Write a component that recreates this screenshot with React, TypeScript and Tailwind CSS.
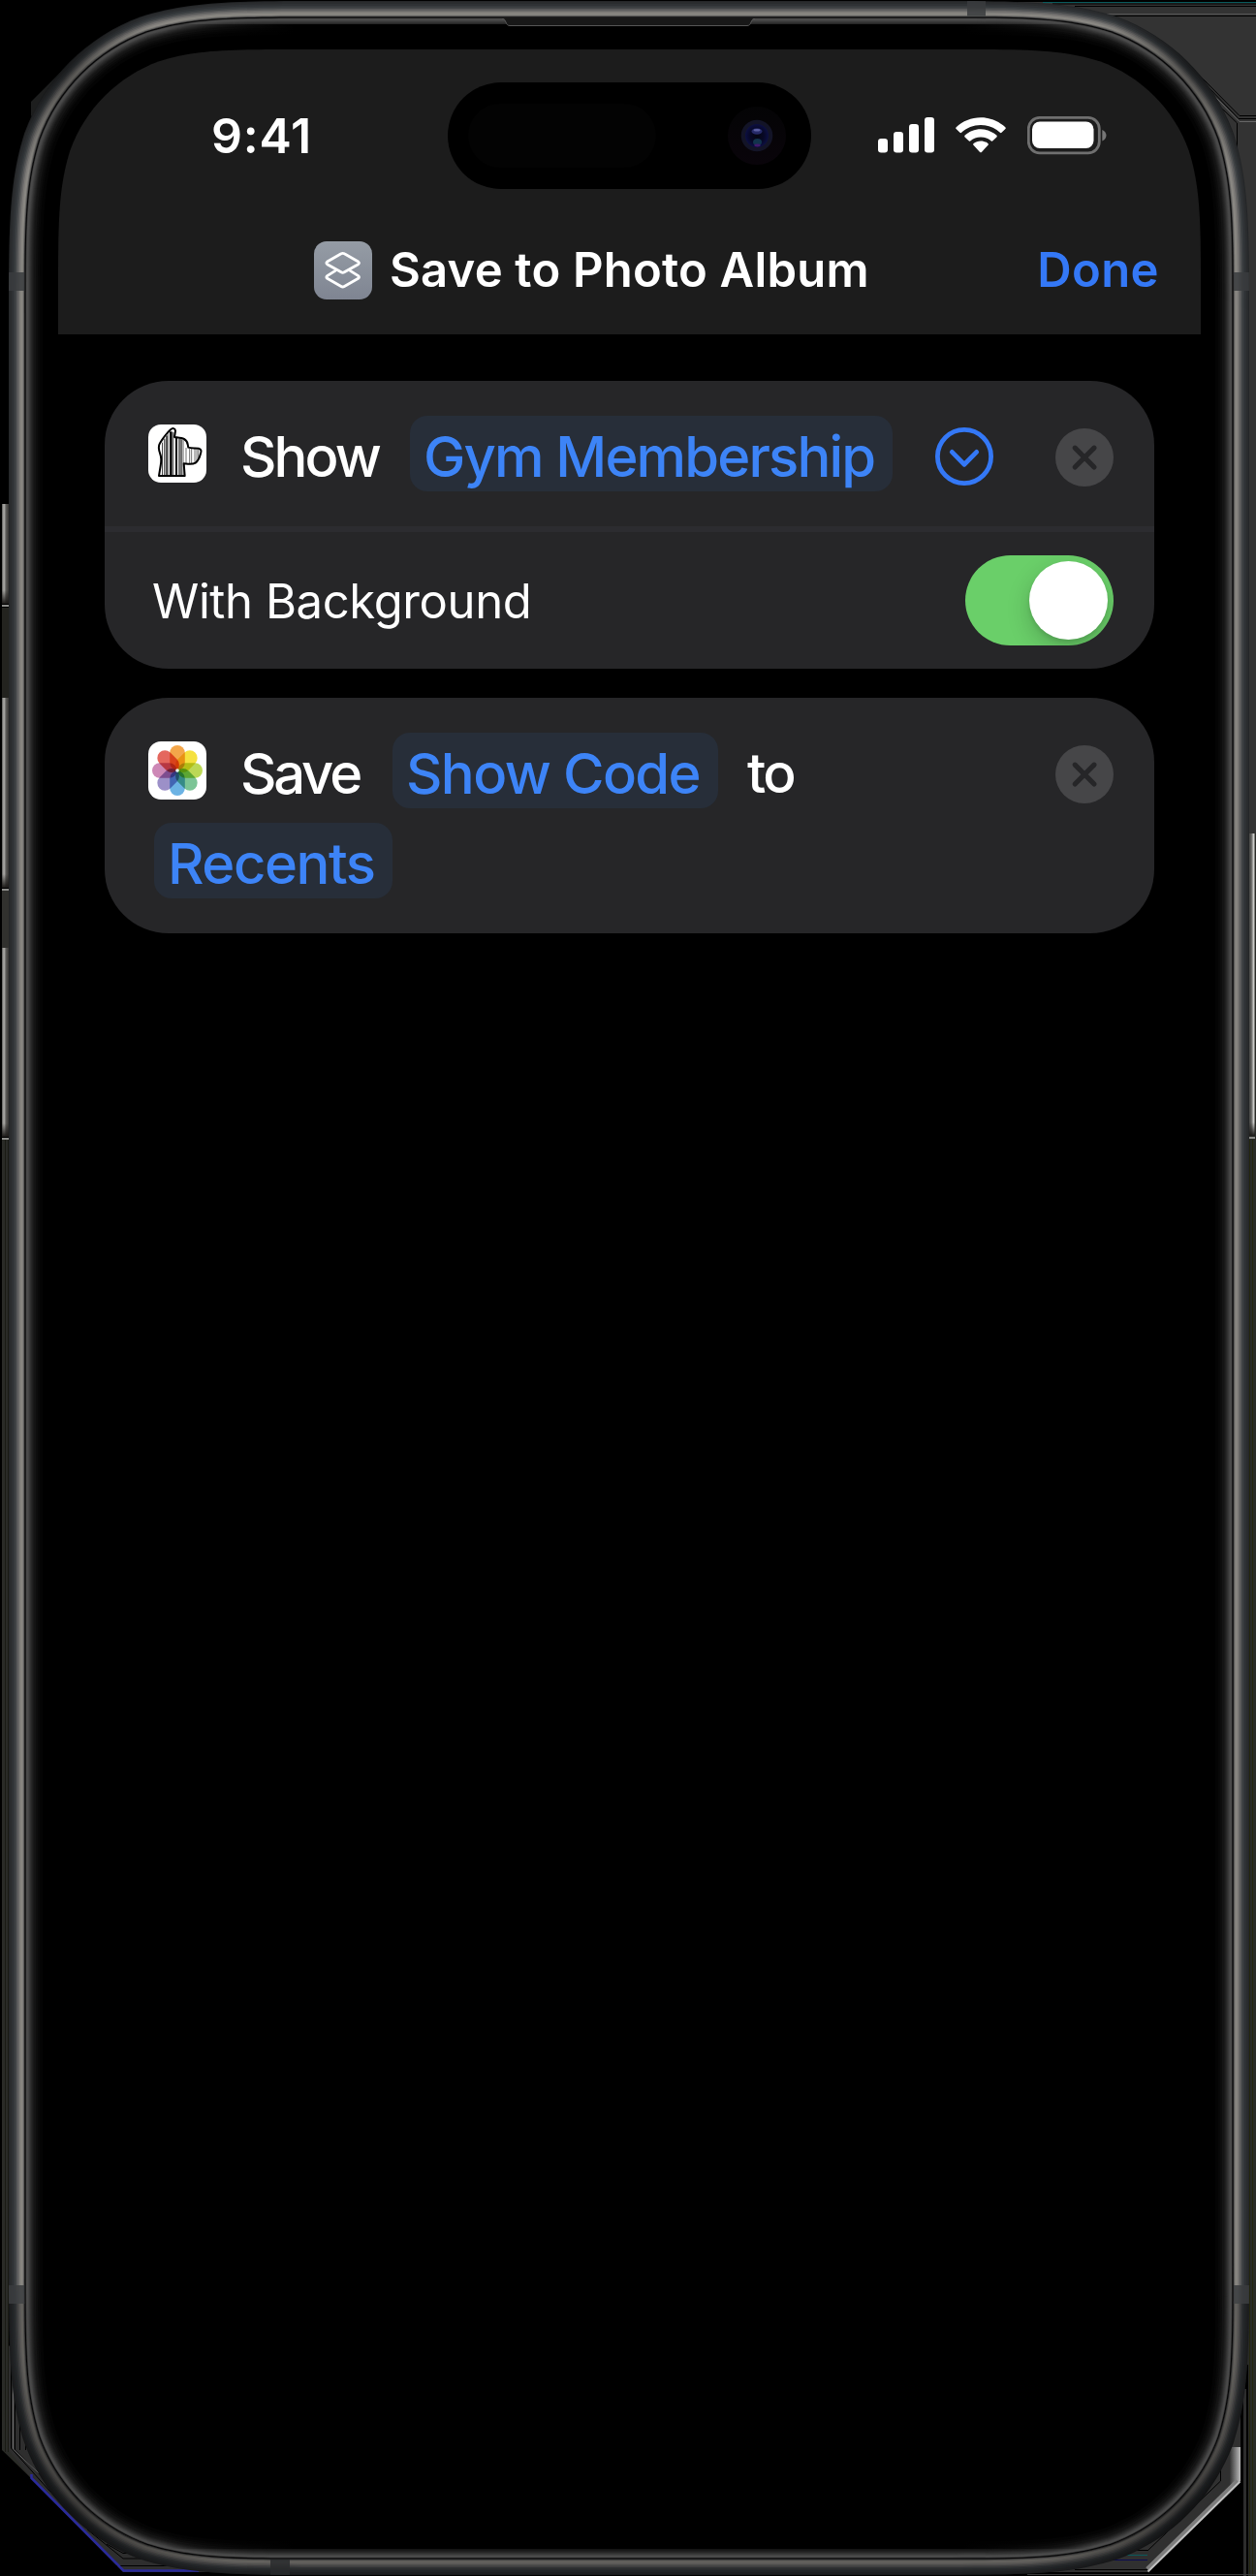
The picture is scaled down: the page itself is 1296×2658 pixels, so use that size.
import type { ReactNode } from "react";

/** Continuous-curvature rounded rectangle, as used for device outlines. */
function smoothRect(x: number, y: number, w: number, h: number, r: number) {
  const a = 1.528665 * r;
  const b = 1.088493 * r;
  const c = 0.868407 * r;
  const d = 0.631494 * r;
  const e = 0.074911 * r;
  const f = 0.372824 * r;
  const g = 0.16906 * r;
  const R = x + w;
  const B = y + h;
  return [
    `M${x + a} ${y}H${R - a}`,
    `C${R - b} ${y} ${R - c} ${y} ${R - d} ${y + e}C${R - f} ${y + g} ${R - g} ${y + f} ${R - e} ${y + d}C${R} ${y + c} ${R} ${y + b} ${R} ${y + a}`,
    `V${B - a}`,
    `C${R} ${B - b} ${R} ${B - c} ${R - e} ${B - d}C${R - g} ${B - f} ${R - f} ${B - g} ${R - d} ${B - e}C${R - c} ${B} ${R - b} ${B} ${R - a} ${B}`,
    `H${x + a}`,
    `C${x + b} ${B} ${x + c} ${B} ${x + d} ${B - e}C${x + f} ${B - g} ${x + g} ${B - f} ${x + e} ${B - d}C${x} ${B - c} ${x} ${B - b} ${x} ${B - a}`,
    `V${y + a}`,
    `C${x} ${y + b} ${x} ${y + c} ${x + e} ${y + d}C${x + g} ${y + f} ${x + f} ${y + g} ${x + d} ${y + e}C${x + c} ${y} ${x + b} ${y} ${x + a} ${y}Z`,
  ].join("");
}

const outline = (inset: number) =>
  smoothRect(9 + inset, 1 + inset, 1280 - inset * 2, 2656 - inset * 2, 216 - inset);

const SCREEN = smoothRect(60, 51, 1179, 2556, 165);

/** Metal band and inner glow, from the outside in. */
const RINGS: [number, string][] = [
  [0, "#242628"],
  [1, "#2a2c2e"],
  [3, "#2f3235"],
  [5, "#363a3d"],
  [6.5, "#424547"],
  [8, "#565758"],
  [9.5, "#6b6a69"],
  [11, "#7e7c79"],
  [12.5, "#898782"],
  [14.7, "#6a6967"],
  [15.7, "#3c3c3c"],
  [16.4, "#050506"],
  [17.4, "#303030"],
  [18, "#4a4a4a"],
  [20, "#434343"],
  [21, "#393939"],
  [22, "#303030"],
  [23, "#272727"],
  [24, "#202020"],
  [25, "#191919"],
  [26, "#141414"],
  [28, "#0d0d0d"],
  [30, "#080808"],
  [32, "#040404"],
  [35, "#000000"],
];

function SideButton({ x, y, h, flip }: { x: number; y: number; h: number; flip?: boolean }) {
  return (
    <g>
      <rect x={x} y={y} width="7" height={h} fill={flip ? "url(#btnR)" : "url(#btnL)"} />
      <rect x={x} y={y + h - 14} width="7" height="14" fill="url(#btnEnd)" />
      <rect x={x} y={y + h + 1} width="7" height="2" fill="#8c8c89" />
    </g>
  );
}

function Surroundings() {
  return (
    <svg className="absolute inset-0" width="1296" height="2658" viewBox="0 0 1296 2658" fill="none">
      <defs>
        <linearGradient id="btnL">
          <stop offset="0" stopColor="#5a5a57" />
          <stop offset=".3" stopColor="#b4b3af" />
          <stop offset=".6" stopColor="#5d5c59" />
          <stop offset="1" stopColor="#383735" />
        </linearGradient>
        <linearGradient id="btnR">
          <stop offset="0" stopColor="#3a3a39" />
          <stop offset=".45" stopColor="#5f5f5d" />
          <stop offset=".8" stopColor="#d0d0cd" />
          <stop offset="1" stopColor="#555553" />
        </linearGradient>
        <linearGradient id="btnEnd" x1="0" y1="0" x2="0" y2="1">
          <stop offset="0" stopColor="#1c1a18" stopOpacity="0" />
          <stop offset="1" stopColor="#1c1a18" />
        </linearGradient>
        <linearGradient id="shine" x1="0" y1="0" x2="1" y2="0">
          <stop offset="0" stopColor="#333333" />
          <stop offset="1" stopColor="#bdbdbd" />
        </linearGradient>
      </defs>

      {/* top right */}
      <path d="M1050 2H1296V860H1200V200Z" fill="#333333" />
      <path d="M1076 2.5H1296" stroke="#0a5a5c" />
      <path d="M1086 4H1296M1109 6.5H1296M1148 16.5H1296" stroke="#000" />
      <path d="M1142 14.5H1296" stroke="#555" />
      <path d="M1236 76L1279 119.5H1296M1246 89L1278 122.5H1296M1259 110L1276.500 127V153" stroke="#000" />
      <path d="M1252 98L1279 125.500H1296" stroke="#666" />
      {/* top left */}
      <path d="M32 105L75 62L60 100L32 120Z" fill="#1d1e1e" />
      {/* left */}
      <path d="M2 627H9V720H2Z" fill="#23231f" />
      <path d="M2 919H9V978H2Z" fill="#31312e" />
      <path d="M2 1176H9V2430L32 2557L2 2528Z" fill="#2a2b27" />
      <path d="M5.500 1176V2530M8.500 1176V2530" stroke="#1a1b14" />
      <SideButton x={2} y={520} h={103} />
      <SideButton x={2} y={720} h={196} />
      <SideButton x={2} y={978} h={195} />
      {/* right */}
      <path d="M1287 860H1296V2658H1287Z" fill="#292a27" />
      <path d="M1292.500 1176V2658M1289.500 1176V2658" stroke="#24260f" />
      <SideButton x={1288} y={860} h={312} flip />
      {/* bottom left */}
      <path d="M9 2420V2528L32 2557L127 2654H225L120 2560L30 2440Z" fill="#2e2e2e" />
      <path d="M11.500 2430V2526L60 2580M15.500 2470V2528L50 2562M20.500 2500V2528M26.500 2515V2528" stroke="#000" />
      <path d="M13.500 2460V2527L40 2552" stroke="#666" />
      <path d="M90 2610L127 2640H160M110 2625L127 2634.500H150M120 2647.500H190" stroke="#000" />
      <path d="M32.500 2553V2557L127.500 2652.500H205" stroke="#2a2a9a" strokeWidth="2.500" />
      {/* bottom right */}
      <path d="M1281 2440H1288V2658H1281Z" fill="#000" />
      <path d="M1284.500 2465V2658" stroke="#2d2d2d" strokeWidth="3" />
      <path d="M1280 2460V2560L1184 2654H1070L1180 2560Z" fill="#303030" />
      <path d="M1269 2525H1280V2560L1269 2569Z" fill="url(#shine)" />
      <path d="M1277 2560L1184 2651" stroke="#7d7d7d" strokeWidth="5" />
      <path d="M1279.500 2560.500L1184.500 2653.500" stroke="#c0c0c0" strokeWidth="2" />
      <path d="M1259.500 2547V2560L1184 2632M1172 2631.500H1184M1109 2651.500H1184" stroke="#000" />
      <path d="M1161 2636.500H1184" stroke="#0a5a5c" />
      <path d="M1148 2641.500H1184" stroke="#0a0a50" />
      <path d="M1060 2656.500H1296" stroke="#3a3a3a" />
    </svg>
  );
}

function DeviceFrame() {
  return (
    <svg className="pointer-events-none absolute inset-0" width="1296" height="2658" viewBox="0 0 1296 2658" fill="none">
      <defs>
        <mask id="bezel" maskUnits="userSpaceOnUse" x="0" y="0" width="1296" height="2658">
          <rect width="1296" height="2658" fill="#fff" />
          <path d={SCREEN} fill="#000" />
        </mask>
        <clipPath id="band">
          <path d={`${outline(0)}${outline(16.5)}`} clipRule="evenodd" />
        </clipPath>
        <linearGradient id="fadeX">
          <stop offset="0" stopColor="#000" stopOpacity="0" />
          <stop offset=".14" stopColor="#000" />
          <stop offset=".86" stopColor="#000" />
          <stop offset="1" stopColor="#000" stopOpacity="0" />
        </linearGradient>
        <radialGradient id="cornerShade">
          <stop offset="0" stopColor="#000" stopOpacity=".4" />
          <stop offset="1" stopColor="#000" stopOpacity="0" />
        </radialGradient>
      </defs>
      <g mask="url(#bezel)">
        {RINGS.map(([inset, color]) => (
          <path key={inset} d={outline(inset)} fill={color} />
        ))}
        <rect x="170" y="25" width="958" height="20" fill="url(#fadeX)" />
        <rect x="170" y="2612" width="958" height="18" fill="url(#fadeX)" />
        <path d="M518 18.500C523 18.500 521 26.500 526 26.500H771C776 26.500 774 18.500 779 18.500" fill="#181818" />
        <path d="M518 19.500C523 19.500 521 26.500 526 26.500H771C776 26.500 774 19.500 779 19.500" stroke="#565656" />
        <g clipPath="url(#band)">
          {/* antenna bands */}
          <g fill="#3a3c3e" fillOpacity=".85">
            <rect x="9" y="281" width="16.500" height="19" />
            <rect x="1273" y="281" width="16" height="19" />
            <rect x="9" y="2358" width="16.500" height="19" />
            <rect x="1273" y="2358" width="16" height="19" />
            <rect x="998" y="1" width="19" height="15.500" />
            <rect x="279" y="2641" width="20" height="16" />
          </g>
          <rect y="2377" width="1296" height="281" fill="#000" fillOpacity=".28" />
          <circle cx="75" cy="2590" r="170" fill="url(#cornerShade)" />
          <circle cx="1223" cy="2590" r="170" fill="url(#cornerShade)" />
          <circle cx="60" cy="70" r="110" fill="url(#cornerShade)" />
          <circle cx="1238" cy="70" r="110" fill="url(#cornerShade)" />
        </g>
      </g>
    </svg>
  );
}

function DynamicIsland() {
  return (
    <div className="flex h-[110px] w-[375px] items-center justify-between rounded-full bg-black pr-[26px] pl-[21px]">
      <div className="h-[66px] w-[194px] rounded-full bg-[#030303]" />
      <svg width="60" height="60" viewBox="0 0 60 60">
        <defs>
          <linearGradient id="lensRing" x1="0" y1="0" x2="0" y2="1">
            <stop offset="0" stopColor="#040405" />
            <stop offset="1" stopColor="#09040a" />
          </linearGradient>
          <radialGradient id="lens">
            <stop offset="0" stopColor="#05060f" />
            <stop offset=".6" stopColor="#070826" />
            <stop offset="1" stopColor="#0c0f42" />
          </radialGradient>
        </defs>
        <circle cx="30" cy="30" r="30" fill="url(#lensRing)" />
        <circle cx="30" cy="30" r="16.300" fill="#131427" />
        <circle cx="30" cy="30" r="12" fill="url(#lens)" />
        <ellipse cx="30" cy="25.500" rx="5.500" ry="3.200" fill="#262a68" />
        <ellipse cx="30" cy="24.300" rx="3.500" ry="1.200" fill="#5c60a4" />
        <ellipse cx="30.500" cy="36.500" rx="4.500" ry="3.600" fill="#12334c" />
        <ellipse cx="30.500" cy="40" rx="3.200" ry="1.400" fill="#41186c" />
      </svg>
    </div>
  );
}

function StatusIcons() {
  return (
    <div className="flex items-center gap-[22px]">
      <svg width="58" height="40" viewBox="0 0 58 40" fill="#fff">
        <rect x="0" y="23" width="10" height="14.500" rx="3.200" />
        <rect x="16" y="16" width="10" height="21.500" rx="3.200" />
        <rect x="32" y="8" width="10" height="29.500" rx="3.200" />
        <rect x="48" y="1" width="10" height="36.500" rx="3.200" />
      </svg>
      <svg width="52" height="40" viewBox="0 0 52 40" fill="#fff">
        <path d="M26 1.200C35.800 1.200 44.700 5 51.300 11.200C51.900 11.800 51.900 12.500 51.400 13L47.500 16.800C47 17.300 46.400 17.300 45.900 16.800C40.600 11.800 33.700 8.900 26 8.900S11.400 11.800 6.100 16.800C5.600 17.300 5 17.300 4.500 16.800L.6 13C.1 12.500 .1 11.800 .7 11.200C7.300 5 16.200 1.200 26 1.200Z" />
        <path d="M26 13.300C32.300 13.300 38 15.700 42.300 19.600C42.900 20.100 42.900 20.900 42.400 21.400L38.400 25.300C37.900 25.800 37.300 25.800 36.800 25.400C33.900 22.900 30.200 21.400 26 21.400S18.100 22.900 15.200 25.400C14.700 25.800 14.100 25.800 13.600 25.300L9.600 21.400C9.100 20.900 9.100 20.100 9.700 19.600C14 15.700 19.700 13.300 26 13.300Z" />
        <path d="M26 25.400C28.800 25.400 31.400 26.400 33.400 28C34 28.500 34 29.200 33.500 29.700L26.900 36.900C26.400 37.500 25.600 37.500 25.100 36.900L18.500 29.700C18 29.200 18 28.500 18.600 28C20.600 26.400 23.200 25.400 26 25.400Z" />
      </svg>
      <svg width="82" height="42" viewBox="0 0 82 42">
        <rect x="1.300" y="2.300" width="73" height="36.500" rx="11.500" fill="none" stroke="#6f6f6f" strokeWidth="2.800" />
        <rect x="5" y="6.500" width="63.500" height="27.500" rx="8" fill="#fff" />
        <path d="M77.300 15C79.800 16 81.500 18.200 81.500 20.800S79.800 25.600 77.300 26.600Z" fill="#777" />
      </svg>
    </div>
  );
}

function ShortcutsIcon() {
  return (
    <div className="h-[60px] w-[60px] shrink-0 rounded-[13px] bg-linear-to-b from-[#959ca5] to-[#7f8592]">
      <svg width="60" height="60" viewBox="0 0 180 180" fill="none" stroke="#fff" strokeWidth="8.500" strokeLinejoin="round" strokeLinecap="round">
        <path d="M84 38.500Q89 35.500 94 38.500L137 63Q142 67 137 71L94 95.500Q89 98.500 84 95.500L41 71Q36 67 41 63Z" />
        <path d="M66 91L41 107Q36 111 41 115L84 139.500Q89 142.500 94 139.500L137 115Q142 111 137 107L112 91" />
      </svg>
    </div>
  );
}

const STRIPES: [number, number, number, string][] = [
  [42, 56, 3, "#444"],
  [49, 44, 3, "#111"],
  [55, 34, 4, "#000"],
  [61, 28, 2, "#555"],
  [66, 22, 8, "#000"],
  [76, 24, 3, "#444"],
  [84, 42, 6, "#000"],
  [93, 44, 9, "#777"],
  [103, 46, 3, "#222"],
  [109, 48, 2, "#888"],
];

function PassAppIcon() {
  return (
    <div className="h-[60px] w-[60px] shrink-0 rounded-[13px] bg-white">
      <svg width="60" height="60" viewBox="0 0 180 180" fill="none">
        {STRIPES.map(([x, y, w, color]) => (
          <rect key={x} x={x} y={y} width={w} height={156 - y} fill={color} />
        ))}
        <path d="M117 72V122M128 75V121M134 75V121M144 75V121M150 76V115M155 77V107" stroke="#555" strokeWidth="2.500" />
        <path
          d="M33 159L38 128C41 112 40 100 37 92C31 76 31 66 36 58C42 47 60 24 69 16C75 10 83 11 84 20L81 39C94 41 104 42 111 45C124 52 121 60 124 71C134 75 146 72 156 74C164 76 165 82 162 90C159 102 154 113 146 119C136 125 122 122 110 121L113 159Z"
          stroke="#000"
          strokeWidth="6"
          strokeLinejoin="round"
        />
      </svg>
    </div>
  );
}

const PETALS = ["#f3a64a", "#f5e13f", "#bcd856", "#7cc496", "#6cb3e4", "#9c90c8", "#cd88b6", "#e4675e"];

function PhotosIcon() {
  return (
    <div className="h-[60px] w-[60px] shrink-0 rounded-[13px] bg-white">
      <svg className="isolate" width="60" height="60" viewBox="0 0 60 60">
        {PETALS.map((color, i) => (
          <rect
            key={color}
            className="mix-blend-multiply"
            x="22.200"
            y="4"
            width="15.600"
            height="25.500"
            rx="7.800"
            fill={color}
            transform={`rotate(${i * 45} 30 30)`}
          />
        ))}
        <circle cx="30" cy="30" r="1.800" fill="#e8fbf4" />
      </svg>
    </div>
  );
}

function RemoveButton() {
  return (
    <button aria-label="Remove" className="mt-[8px] mr-[42px] ml-auto h-[60px] w-[60px] shrink-0">
      <svg width="60" height="60" viewBox="0 0 60 60">
        <circle cx="30" cy="30" r="30" fill="#464648" />
        <path d="M20.200 20.200L40 40M40 20.200L20.200 40" stroke="#262628" strokeWidth="5.200" strokeLinecap="round" />
      </svg>
    </button>
  );
}

function ExpandButton() {
  return (
    <button aria-label="Collapse options" className="mt-[6px] ml-[44px] h-[60px] w-[60px] shrink-0">
      <svg width="60" height="60" viewBox="0 0 60 60" fill="none" stroke="#3478f6">
        <circle cx="30" cy="30" r="27.600" strokeWidth="4.800" />
        <path d="M17.300 25.400L30 38.300L42.700 25.400" strokeWidth="4.800" strokeLinecap="round" strokeLinejoin="round" />
      </svg>
    </button>
  );
}

function Pill({ className, children }: { className: string; children: ReactNode }) {
  return (
    <span className={`flex h-[78px] shrink-0 items-center rounded-[18px] bg-[#272e39] pt-[6px] pl-[14px] text-[#3d84f7] ${className}`}>
      {children}
    </span>
  );
}

export default function App() {
  return (
    <div className="relative h-[2658px] w-[1296px] overflow-hidden bg-black font-['Inter','Liberation_Sans',sans-serif] text-white">
      <Surroundings />
      <div className="relative px-[60px] py-[51px]">
        <main className="h-[2556px] w-[1179px] rounded-[150px] bg-black">
          <header className="h-[294px] rounded-t-[130px] bg-[#1c1c1c] pt-[34px]">
            <div className="flex h-[110px] items-center">
              <div className="w-[402px] pl-[158px] text-[50px] leading-[60px] font-semibold tracking-[0.8px]">9:41</div>
              <DynamicIsland />
              <div className="pl-[69px]">
                <StatusIcons />
              </div>
            </div>
            <div className="flex h-[150px] items-center pt-[18px] pr-[43px] pl-[264px]">
              <ShortcutsIcon />
              <h1 className="ml-[18px] text-[49px] leading-[60px] font-semibold tracking-[0.2px] whitespace-nowrap">
                Save to Photo Album
              </h1>
              <button className="ml-auto text-[49px] leading-[60px] font-[560] tracking-[0.4px] text-[#3478f6]">Done</button>
            </div>
          </header>

          <div className="flex flex-col gap-[30px] px-12 pt-12 text-[58px] leading-[72px] font-medium whitespace-nowrap">
            <section className="h-[297px] rounded-[66px] bg-[#262628]">
              <div className="flex h-[150px] items-center pl-[45px]">
                <PassAppIcon />
                <span className="mt-[6px] ml-[35px] w-[175px] shrink-0 tracking-[-2.9px]">Show</span>
                <Pill className="w-[498px] tracking-[-1.85px]">Gym Membership</Pill>
                <ExpandButton />
                <RemoveButton />
              </div>
              <div className="h-[6px] bg-[#2c2c30]" />
              <div className="flex h-[141px] items-center justify-between pr-[42px] pl-[49px]">
                <span className="mt-[3px] text-[49px] leading-[60px] font-normal tracking-[-0.4px]">With Background</span>
                <button
                  role="switch"
                  aria-checked="true"
                  aria-label="With Background"
                  className="flex h-[93px] w-[153px] items-center justify-end overflow-hidden rounded-full bg-[#6acf69] pr-[6px]"
                >
                  <span className="h-[81px] w-[81px] rounded-full bg-white shadow-[0_9px_24px_rgba(0,0,0,0.2),0_3px_4px_rgba(0,0,0,0.1)]" />
                </button>
              </div>
            </section>

            <section className="flex h-[243px] flex-col gap-[15px] rounded-[66px] bg-[#262628] pt-9">
              <div className="flex h-[78px] items-center pl-[45px]">
                <PhotosIcon />
                <span className="mt-[6px] ml-[35px] w-[157px] shrink-0 tracking-[-3.2px]">Save</span>
                <Pill className="w-[336px] tracking-[-1.6px]">Show Code</Pill>
                <span className="mt-[6px] ml-[30px] text-[57px] tracking-[-2.6px]">to</span>
                <RemoveButton />
              </div>
              <div className="flex pl-[51px]">
                <Pill className="w-[246px] tracking-[-1.45px]">Recents</Pill>
              </div>
            </section>
          </div>
        </main>
      </div>
      <DeviceFrame />
    </div>
  );
}
